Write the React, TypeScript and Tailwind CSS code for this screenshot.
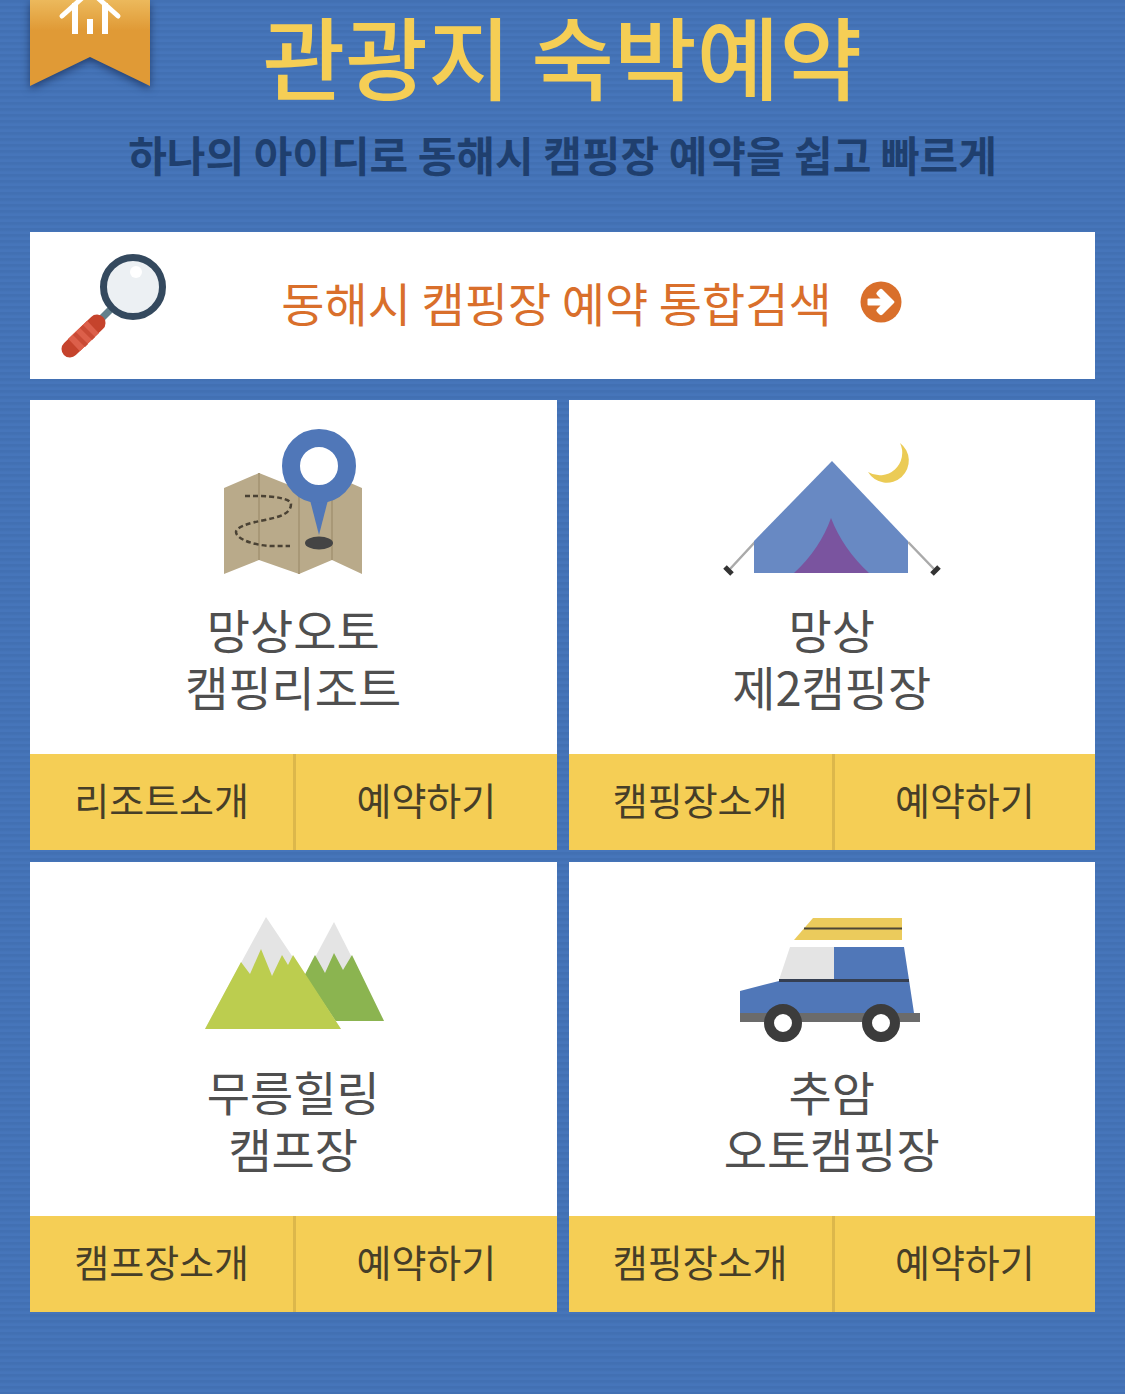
import React from 'react';

interface CampCardProps {
  title: string[];
  introLabel: string;
  icon: React.ReactNode;
}

const HomeRibbon: React.FC = () => (
  <a href="#home" aria-label="홈" className="absolute top-0 left-[30px]">
    <svg
      viewBox="0 0 120 86"
      className="w-[120px] h-[86px] overflow-visible drop-shadow-[0_3px_4px_rgba(20,40,80,0.7)]"
    >
      <defs>
        <linearGradient id="ribbon" x1="0" y1="0" x2="0" y2="1">
          <stop offset="0" stopColor="#ecb95c" />
          <stop offset="0.35" stopColor="#e09a36" />
          <stop offset="1" stopColor="#e09a36" />
        </linearGradient>
      </defs>
      <path d="M0 0H120V86L60 57L0 86Z" fill="url(#ribbon)" />
      <path
        d="M32 16L60 -9L88 16"
        fill="none"
        stroke="#fff"
        strokeWidth="5"
        strokeLinecap="round"
      />
      <path d="M45 3V34M75 3V34M60 19V34" stroke="#fff" strokeWidth="6" />
    </svg>
  </a>
);

const MagnifierIcon: React.FC = () => (
  <svg viewBox="0 0 108 108" className="w-[108px] h-[108px] shrink-0" aria-hidden="true">
    <path d="M51 57L42 66" stroke="#64808c" strokeWidth="7" />
    <path d="M37 71L10 97" stroke="#c5432c" strokeWidth="17" strokeLinecap="round" />
    <path d="M33 75L14 93" stroke="#dc5f4a" strokeWidth="17" />
    <path d="M29 79L26 82M22 86L19 89" stroke="#c94a35" strokeWidth="17" />
    <circle cx="73" cy="35" r="29.5" fill="#ecf0f3" stroke="#34495e" strokeWidth="7" />
    <circle cx="76" cy="20" r="6" fill="#fff" />
  </svg>
);

const ArrowCircleIcon: React.FC = () => (
  <svg viewBox="0 0 42 42" className="w-[42px] h-[42px] shrink-0" aria-hidden="true">
    <circle cx="21" cy="21" r="20.5" fill="currentColor" />
    <path d="M7.5 18.5Q7.5 17.5 8.5 17.5H20.5L17 14Q15.5 12.5 17 11L19.5 8.5Q21 7 22.5 8.5L34 20Q35 21 34 22L22.5 33.5Q21 35 19.5 33.5L17 31Q15.5 29.5 17 28L20.5 24.5H8.5Q7.5 24.5 7.5 23.5Z" fill="#fff" />
  </svg>
);

const MapIcon: React.FC = () => (
  <svg viewBox="0 0 220 160" className="w-[220px] h-[160px]" aria-hidden="true">
    <path d="M41 64L76 49L116 65L149 51L179 64V150L149 136L116 150L76 136L41 150Z" fill="#b9aa8a" />
    <path d="M76 49V136M116 65V150M149 51V136" stroke="#a89877" strokeWidth="2" />
    <path
      d="M62 72H76C92 72 108 75 108 80C108 90 96 93 82 96C66 99 53 103 53 108C53 115 72 122 90 122H107"
      fill="none"
      stroke="#4a4234"
      strokeWidth="2.5"
      strokeDasharray="5 3"
    />
    <ellipse cx="136" cy="119" rx="14" ry="6.5" fill="#444" />
    <path d="M127 76L136 111L145 76Z" fill="#5077b8" />
    <circle cx="136" cy="42" r="28" fill="#fff" stroke="#5077b8" strokeWidth="18" />
  </svg>
);

const TentIcon: React.FC = () => (
  <svg viewBox="0 0 220 160" className="w-[220px] h-[160px]" aria-hidden="true">
    <path d="M33 118L8 145M186 118L212 145" stroke="#aaa" strokeWidth="2.5" />
    <path d="M3 143L10 150M210 150L217 143" stroke="#333" strokeWidth="5" />
    <path d="M110 37L186 117V149H32V117Z" fill="#6889c3" />
    <path d="M109 94Q98 125 72 149H147Q121 125 109 94Z" fill="#7a549f" />
    <path d="M178 19A22 22 0 1 1 146 48A22.5 22.5 0 0 0 178 19Z" fill="#ebcb55" />
  </svg>
);

const MountainIcon: React.FC = () => (
  <svg viewBox="0 0 220 160" className="w-[220px] h-[160px]" aria-hidden="true">
    <path d="M151 36L201 135H98Z" fill="#e4e4e4" />
    <path d="M132 69L142 87L151 67L160 84L169 69L201 135H98Z" fill="#8bb450" />
    <path d="M83 31L158 143H22Z" fill="#e4e4e4" />
    <path d="M58 76L67 88L78 63L89 90L99 69L105 79L110 69L158 143H22Z" fill="#bccd4f" />
  </svg>
);

const CarIcon: React.FC = () => (
  <svg viewBox="0 0 220 160" className="w-[220px] h-[160px]" aria-hidden="true">
    <path d="M91 32H180V54H72Z" fill="#ebcb5c" />
    <path d="M82 42.5H180" stroke="#4c4636" strokeWidth="2" />
    <path d="M68 61H112V94H57Z" fill="#e4e4e4" />
    <path d="M112 61H182L192 127H18V105L57 95H112Z" fill="#5077b8" />
    <path d="M57 94.5H187" stroke="#353f52" strokeWidth="3" />
    <path d="M18 127H198V136H18Z" fill="#6b6b6b" />
    <circle cx="61" cy="137" r="14" fill="#fff" stroke="#3c3c3c" strokeWidth="10" />
    <circle cx="159" cy="137" r="14" fill="#fff" stroke="#3c3c3c" strokeWidth="10" />
  </svg>
);

const CampCard: React.FC<CampCardProps> = ({ title, introLabel, icon }) => (
  <article className="flex flex-col bg-white">
    <div className="flex flex-col items-center pt-6 pb-10">
      {icon}
      <h2 className="mt-4 text-center text-[47px] leading-[57px] text-[#4f4f4f]">
        {title.map((line) => (
          <span key={line} className="block">
            {line}
          </span>
        ))}
      </h2>
    </div>
    <div className="grid grid-cols-2 bg-[#f5ce55] text-center text-[38px] leading-[90px] text-[#463e28]">
      <a href="#intro" className="pb-[6px]">
        {introLabel}
      </a>
      <a href="#reserve" className="border-l-3 border-[#dcb74b] pb-[6px]">
        예약하기
      </a>
    </div>
  </article>
);

const camps: CampCardProps[] = [
  { title: ['망상오토', '캠핑리조트'], introLabel: '리조트소개', icon: <MapIcon /> },
  { title: ['망상', '제2캠핑장'], introLabel: '캠핑장소개', icon: <TentIcon /> },
  { title: ['무릉힐링', '캠프장'], introLabel: '캠프장소개', icon: <MountainIcon /> },
  { title: ['추암', '오토캠핑장'], introLabel: '캠핑장소개', icon: <CarIcon /> },
];

const App: React.FC = () => {
  return (
    <div className="relative min-h-screen bg-[#4472b6] bg-[repeating-linear-gradient(180deg,#4270b3_0px,#4270b3_2px,#4675ba_4px,#4675ba_6px)] px-[30px] pb-20 font-['Noto_Sans_CJK_KR',sans-serif]">
      <HomeRibbon />
      <header className="pb-[46px] text-center">
        <h1 className="text-[90px] leading-[108px] font-medium text-[#f5ce55]">관광지 숙박예약</h1>
        <p className="mt-[14px] text-[42px] leading-[64px] font-bold text-[#1f3f6e]">
          하나의 아이디로 동해시 캠핑장 예약을 쉽고 빠르게
        </p>
      </header>

      <main>
        <a href="#search" className="flex items-center bg-white px-[30px] h-[147px] text-[#d96f2b]">
          <MagnifierIcon />
          <span className="flex flex-1 items-center justify-center gap-7 pr-[50px] pb-2 text-[47px] leading-[57px]">
            동해시 캠핑장 예약 통합검색
            <ArrowCircleIcon />
          </span>
        </a>

        <section className="mt-[21px] grid grid-cols-2 gap-3">
          {camps.map((camp) => (
            <CampCard key={camp.title.join(' ')} {...camp} />
          ))}
        </section>
      </main>
    </div>
  );
};

export default App;
